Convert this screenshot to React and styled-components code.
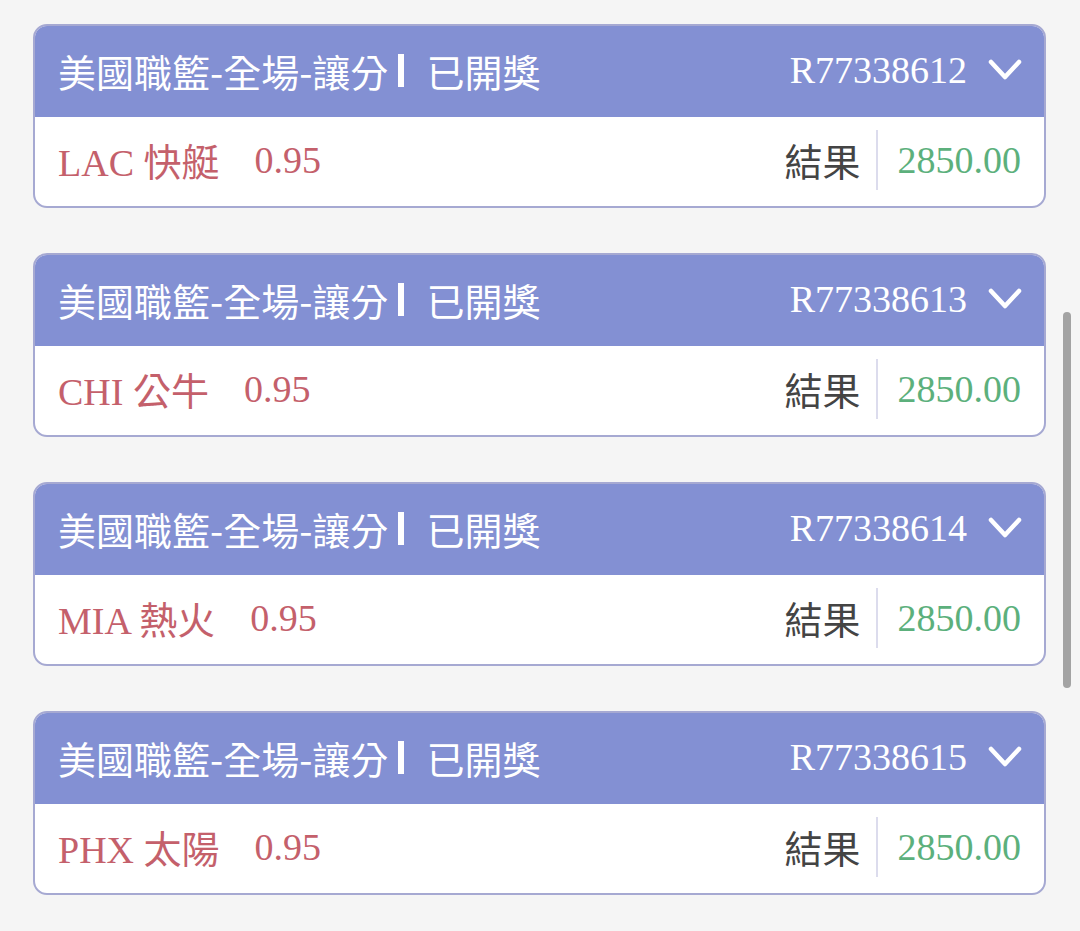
import styled, { createGlobalStyle } from "styled-components";

const bets = [
  { id: "R77338612", team: "LAC 快艇", odds: "0.95", amount: "2850.00" },
  { id: "R77338613", team: "CHI 公牛", odds: "0.95", amount: "2850.00" },
  { id: "R77338614", team: "MIA 熱火", odds: "0.95", amount: "2850.00" },
  { id: "R77338615", team: "PHX 太陽", odds: "0.95", amount: "2850.00" },
];

function Chevron() {
  return (
    <svg width="34" height="22" viewBox="0 0 34 22" fill="none">
      <polyline
        points="3,3 17,18 31,3"
        stroke="#fff"
        strokeWidth="4.5"
        strokeLinecap="round"
        strokeLinejoin="round"
      />
    </svg>
  );
}

export default function App() {
  return (
    <>
      <GlobalStyle />
      <Page>
        {bets.map((bet) => (
          <Card key={bet.id}>
            <Header>
              <Title>美國職籃-全場-讓分</Title>
              <Bar />
              <Status>已開獎</Status>
              <OrderNo>{bet.id}</OrderNo>
              <Chevron />
            </Header>
            <Body>
              <Team>{bet.team}</Team>
              <Odds>{bet.odds}</Odds>
              <ResultLabel>結果</ResultLabel>
              <Divider />
              <Amount>{bet.amount}</Amount>
            </Body>
          </Card>
        ))}
      </Page>
      <Scrollbar />
    </>
  );
}

const GlobalStyle = createGlobalStyle`
  html, body {
    margin: 0;
    background: #f5f5f5;
    overflow: hidden;
  }
  body {
    font-family: "Liberation Serif", "Noto Sans CJK TC", serif;
  }
`;

const Page = styled.div`
  display: flex;
  flex-direction: column;
  gap: 45px;
  padding: 24px 34px 0 33px;
`;

const Card = styled.div`
  border: 2px solid #a6a9d2;
  border-radius: 14px;
  overflow: hidden;
  background: #fff;
`;

const Header = styled.div`
  display: flex;
  align-items: center;
  height: 91px;
  padding: 0 22px 3px 23px;
  box-sizing: border-box;
  background: #8390d3;
  color: #fff;
  font-size: 38px;
`;

const Title = styled.span`
  font-family: "Noto Sans CJK TC", sans-serif;
`;

const Bar = styled.span`
  width: 6px;
  height: 33px;
  margin: 0 22px 0 10px;
  background: #fff;
`;

const Status = styled.span`
  flex: 1;
  font-family: "Noto Sans CJK TC", sans-serif;
`;

const OrderNo = styled.span`
  margin-right: 21px;
`;

const Body = styled.div`
  display: flex;
  align-items: center;
  height: 89px;
  padding: 0 23px 4px;
  box-sizing: border-box;
  font-size: 38px;
`;

const Team = styled.span`
  color: #c4606b;
`;

const Odds = styled.span`
  flex: 1;
  margin-left: 35px;
  color: #c4606b;
`;

const ResultLabel = styled.span`
  color: #444;
  font-family: "Noto Sans CJK TC", sans-serif;
`;

const Divider = styled.span`
  width: 2px;
  height: 60px;
  margin: 0 20px 0 15px;
  background: #dcdced;
`;

const Amount = styled.span`
  color: #5cb07c;
`;

const Scrollbar = styled.div`
  position: fixed;
  top: 312px;
  left: 1063px;
  width: 8px;
  height: 376px;
  border-radius: 4px;
  background: #a3a3a3;
`;
